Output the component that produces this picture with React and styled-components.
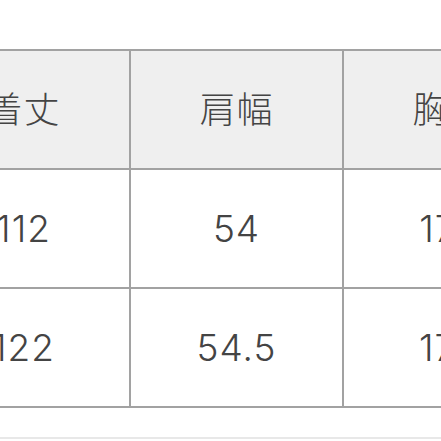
import React from 'react'
import styled, { createGlobalStyle } from 'styled-components';

const GlobalStyle = createGlobalStyle`
    html, body {
        margin: 0;
        padding: 0;
        background: #ffffff;
        overflow: hidden;
    }
    body {
        font-family: Inter, "Noto Sans CJK JP", sans-serif;
        color: #444444;
    }
`;

const Page = styled.div`
    width: 441px;
    height: 441px;
    overflow: hidden;
    padding-top: 49px;
    box-sizing: border-box;
`;

const SizeGrid = styled.div`
    display: grid;
    grid-template-columns: repeat(4, 211px);
    grid-auto-rows: 117px;
    gap: 2px;
    padding: 2px;
    width: max-content;
    margin-left: -84px;
    background: #a2a2a2;
`;

const Cell = styled.div`
    display: flex;
    align-items: center;
    justify-content: center;
    background: ${p => (p.$head ? '#efefef' : '#ffffff')};
    font-size: ${p => (p.$head ? '36px' : '37px')};
    font-weight: ${p => (p.$head ? 300 : 350)};
    letter-spacing: 1px;
    line-height: 1;
`;

const Divider = styled.div`
    margin-top: 29px;
    height: 2px;
    background: #e8e8e8;
`;

const headers = ['着丈', '肩幅', '胸囲', '袖丈'];
const rows = [
    ['112', '54', '170', '60'],
    ['122', '54.5', '172', '62'],
];

function App() {
    return (
        <>
        <GlobalStyle/>
        <Page>
            <SizeGrid>
                {headers.map(h => <Cell key={h} $head>{h}</Cell>)}
                {rows.map((r, i) => r.map((v, j) => <Cell key={i + '-' + j}>{v}</Cell>))}
            </SizeGrid>
            <Divider/>
        </Page>
        </>
    )
}

export default App
